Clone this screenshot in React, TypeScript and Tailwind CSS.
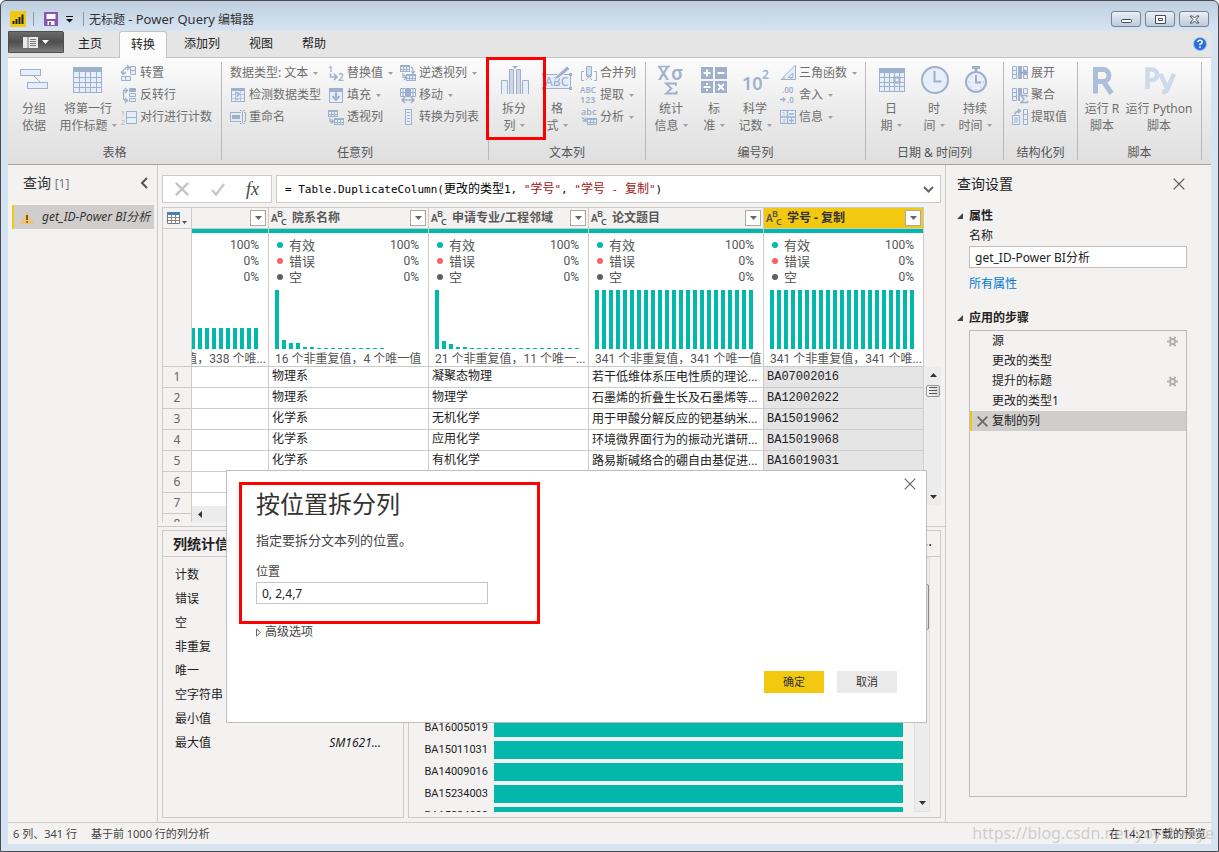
import React from "react";

const C = "#9fb0cc";
const F = "#e6eefa";

function Svg({ s = 16, h, children }: { s?: number; h?: number; children: React.ReactNode }) {
  return (
    <svg width={s} height={h ?? s} viewBox={`0 0 ${s} ${h ?? s}`} fill="none" stroke={C} strokeWidth="1" className="shrink-0 overflow-visible" aria-hidden="true">
      {children}
    </svg>
  );
}

function Caret({ className = "text-[#a0a0a0]" }: { className?: string }) {
  return (
    <svg width="5" height="3" viewBox="0 0 5 3" className={`shrink-0 ${className}`} aria-hidden="true">
      <path d="M0 0h5L2.5 3z" fill="currentColor" />
    </svg>
  );
}

/* ---------- large ribbon icons ---------- */
const big: Record<string, React.ReactNode> = {
  group: (
    <Svg s={30}>
      <rect x="1.500" y="3.500" width="20" height="6" fill={F} />
      <rect x="8.500" y="16.500" width="20" height="6" fill={F} />
      <path d="M15 10l6 6" />
    </Svg>
  ),
  header: (
    <Svg s={30}>
      <rect x=".5" y="1.500" width="28" height="25" fill={F} />
      <rect x="0" y="1" width="29" height="5" fill={C} stroke="none" />
      <path d="M6.500 6v20M12.500 6v20M17.500 6v20M23.500 6v20M1 11.500h27M1 16.500h27M1 21.500h27" />
    </Svg>
  ),
  split: (
    <Svg s={30} h={30}>
      <path d="M2.500 28V14.500h6V28M29.500 28V14.500h-6V28" fill={F} />
      <path d="M10.500 28V3.500h4V28M17.500 28V3.500h4V28" fill="#ccd8e9" />
      <path d="M13 0h6L16 3z" fill={C} stroke="none" />
    </Svg>
  ),
  format: (
    <Svg s={30}>
      <rect x="1.500" y="8.500" width="27" height="14" fill={F} />
      <path d="M0 7h3v3H0zM27 7h3v3h-3zM0 21h3v3H0zM27 21h3v3h-3z" fill={C} stroke="none" />
      <text x="3" y="20" fontSize="12" fontWeight="500" fill={C} stroke="none">ABC</text>
      <path d="M11 15l3-5L25 0l3 3L17 12z" fill={C} stroke="#f4f4f4" />
    </Svg>
  ),
  stats: (
    <Svg s={30}>
      <text x="2" y="14" fontSize="17" fontWeight="600" fill={C} stroke="none">X</text>
      <text x="15" y="14" fontSize="19" fontWeight="600" fill={C} stroke="none">σ</text>
      <path d="M2 .5h12" strokeWidth="1.500" />
      <path d="M20 20v-2.500H10l5.500 5L10 27.500h10.500V25" strokeWidth="1.800" />
    </Svg>
  ),
  standard: (
    <Svg s={30}>
      <path d="M2 1h12v12H2zM16 1h12v12H16zM2 15h12v12H2zM16 15h12v12H16z" fill={C} stroke="none" />
      <path d="M4.500 7h7M8 3.500v7M18.500 7h7M4.500 21h7M19 18l6 6M25 18l-6 6" stroke="#fff" strokeWidth="2" />
      <path d="M7 17h2v2H7zM7 23h2v2H7z" fill="#fff" stroke="none" />
    </Svg>
  ),
  sci: (
    <Svg s={30}>
      <text x="2" y="24" fontSize="18" fontWeight="600" fill={C} stroke="none">10</text>
      <text x="22" y="13" fontSize="12" fontWeight="600" fill={C} stroke="none">2</text>
    </Svg>
  ),
  date: (
    <Svg s={30}>
      <rect x="3.500" y="2.500" width="25" height="23" fill={F} />
      <rect x="3" y="2" width="26" height="5" fill={C} stroke="none" />
      <path d="M8.500 7v18M13.500 7v18M23.500 7v18M18.500 7v18M4 11.500h24M4 16.500h24M4 20.500h24" />
      <rect x="18.500" y="11.500" width="5" height="5" strokeWidth="2" />
    </Svg>
  ),
  time: (
    <Svg s={30}>
      <circle cx="16" cy="14" r="13" fill={F} strokeWidth="2" />
      <path d="M15.500 5v10.500h7" strokeWidth="2" />
    </Svg>
  ),
  duration: (
    <Svg s={30}>
      <path d="M12 1.500h8M16 2v4" strokeWidth="3" />
      <circle cx="16" cy="16" r="10" fill={F} strokeWidth="2" />
      <path d="M16 9v7.500h5" strokeWidth="2" />
      <path d="M8.500 16h1M23 16h1M16 23v1M10.700 10.700l.7.700M21.300 21.300l-.7-.7M10.700 21.300l.7-.7" />
    </Svg>
  ),
  r: (
    <Svg s={30}>
      <path d="M8.500 27.500V3.500H16a5.800 5.800 0 0 1 0 12H9M16.500 15.500l8 12" stroke="#adbfd8" strokeWidth="5" />
    </Svg>
  ),
  py: (
    <Svg s={34} h={30}>
      <path d="M5.500 23V3.500H10a5 5 0 0 1 0 10.500H6" stroke="#cddaea" strokeWidth="4.500" />
      <path d="M18.500 8l6.500 14M32 8l-6.500 15q-1.500 3.500-5.500 3" stroke="#cddaea" strokeWidth="4.500" />
    </Svg>
  ),
};

/* ---------- small ribbon icons ---------- */
const miniTable = (x: number, y: number) => (
  <g transform={`translate(${x} ${y})`}>
    <rect x=".5" y=".5" width="9" height="6" fill={F} />
    <path d="M0 1h10" strokeWidth="2" />
    <path d="M3.500 1v6M6.500 1v6M1 4.500h8" />
  </g>
);

const small: Record<string, React.ReactNode> = {
  transpose: (
    <Svg>
      <path d="M9.500 1.500h5v8h-5zM9.500 5.500h5M.5 11.500h9v4h-9zM4.500 11.500v4" fill={F} />
      <path d="M2 9V5.500L5.500 2.500H8M6 0l2.500 2.500L6 5M0 6.500L2 9.500l3-2.500" strokeWidth="1.400" />
    </Svg>
  ),
  reverse: (
    <Svg>
      <path d="M8.500 1.500h6v3h-6zM8.500 6.500h6v3h-6zM8.500 11.500h6v3h-6z" fill={F} />
      <path d="M8 2h7v3H8z" fill={C} stroke="none" />
      <path d="M6 3.500H2.500V12l1.500 1.500h2M4 1l2.500 2.500L4 6M4 11l2.500 2.500L4 16" strokeWidth="1.300" />
    </Svg>
  ),
  count: (
    <Svg>
      <path d="M5.500 2.500h10v12h-10zM5.500 8.500h10" fill={F} />
      <text x="0" y="7" fontSize="7" fill={C} stroke="none">1</text>
      <text x="0" y="16" fontSize="7" fill={C} stroke="none">2</text>
    </Svg>
  ),
  detect: (
    <Svg>
      <rect x="1.500" y="1.500" width="13" height="13" fill={F} />
      <path d="M1 2.500h14" strokeWidth="3" />
      <path d="M5.500 4v10M10.500 4v10M2 7.500h12M2 11.500h12" strokeOpacity=".6" />
      <text x="5" y="13" fontSize="10" fontWeight="700" fill={C} stroke="none">?</text>
    </Svg>
  ),
  rename: (
    <Svg>
      <path d="M11 3.500H.5v9H11M14 3.500h1.500v9H14" />
      <path d="M2 6h8v4H2z" fill={C} stroke="none" />
      <path d="M12.500 3v10M10 1.500h1.500l1 1 1-1H15M10 14.500h1.500l1-1 1 1H15" />
    </Svg>
  ),
  replace: (
    <Svg>
      <text x="0" y="7" fontSize="9" fontWeight="600" fill={C} stroke="none">1</text>
      <text x="10" y="16" fontSize="10" fontWeight="600" fill={C} stroke="none">2</text>
      <path d="M2.500 8.500v3.500H8M6 9l3 3-3 3" strokeWidth="1.600" />
    </Svg>
  ),
  fill: (
    <Svg>
      <rect x="1.500" y="1.500" width="13" height="14" fill={F} />
      <path d="M1 3h14" strokeWidth="4" />
      <path d="M8 5.500v7M4.500 9L8 12.700 11.500 9" strokeWidth="2" />
    </Svg>
  ),
  pivot: (
    <Svg>
      {miniTable(0, 1)}
      {miniTable(6, 9)}
      <path d="M2 9v3.500h3M3.500 10.500l2 2-2 2" strokeWidth="1.300" />
    </Svg>
  ),
  unpivot: (
    <Svg>
      {miniTable(0, 0)}
      {miniTable(6, 9)}
      <path d="M3 8v4.500h3M4 10l2.500 2.500L4 15M11 2l2 2v4M11 6l2 2.500L15 6" strokeWidth="1.200" />
    </Svg>
  ),
  move: (
    <Svg>
      <path d="M.5 1.500h5v8h-5zM10.500 1.500h5v8h-5zM3 1.500v8M13 1.500v8M.5 5.500h5M10.500 5.500h5" fill={F} />
      <path d="M6 1h4v9H6z" fill={C} stroke="none" />
      <path d="M2 13h12M5 10l-3 3 3 3M11 10l3 3-3 3" strokeWidth="1.500" />
    </Svg>
  ),
  list: (
    <Svg>
      <rect x="5.500" y=".5" width="6" height="15" fill={F} />
      <path d="M7 3.500h3M7 6.500h3M7 9.500h3M7 12.500h3" />
    </Svg>
  ),
  merge: (
    <Svg>
      <path d="M3 6.500H.5v9H3M13 6.500h2.500v9H13" />
      <path d="M5.500 11V1.500h5V11" fill="#d3deed" />
      <path d="M5 8l3 3.500L5 15M11 8l-3 3.500 3 3.500M5.500 11.500h5" />
    </Svg>
  ),
  extract: (
    <Svg>
      <text x="-1" y="6" fontSize="8" fontWeight="600" fill={C} stroke="none">ABC</text>
      <text x="-1" y="16" fontSize="9" fontWeight="600" fill={C} stroke="none">123</text>
    </Svg>
  ),
  parse: (
    <Svg>
      <text x="0" y="6" fontSize="9" fontWeight="600" fill={C} stroke="none">abc</text>
      {miniTable(6, 9)}
      <path d="M1 8.500l4 3M5 8.500v3.500H1.500" strokeWidth="1.300" />
    </Svg>
  ),
  trig: (
    <Svg>
      <path d="M1 14.500h14.500V0zM8 12.500h5V8z" fill={F} />
      <path d="M4 14v-2M11 14v-2" />
    </Svg>
  ),
  round: (
    <Svg>
      <text x="2" y="6" fontSize="8" fontWeight="600" fill={C} stroke="none">.00</text>
      <text x="7" y="16" fontSize="8" fontWeight="600" fill={C} stroke="none">.0</text>
      <path d="M0 12.500h5M3 10.500l2 2-2 2" strokeWidth="1.300" />
    </Svg>
  ),
  info: (
    <Svg>
      <rect x=".5" y="1.500" width="15" height="13" fill={F} />
      <path d="M7.500 2v12M1 8h14M9 5h5M9 11.500h5M11.500 9v5" strokeWidth="1.300" />
      <text x="2" y="7" fontSize="6" fill={C} stroke="none">1</text>
      <text x="2" y="14" fontSize="6" fill={C} stroke="none">3</text>
    </Svg>
  ),
  expand: (
    <Svg>
      <path d="M.5 1.500h4v12h-4zM11.500 1.500h4v12h-4zM.5 5.500h4M.5 9.500h4M11.500 5.500h4M11.500 9.500h4" fill={F} />
      <path d="M6 1h4v13H6z" fill={C} stroke="none" />
      <path d="M8 7.500h6M12 5l2.500 2.500L12 10" strokeWidth="1.400" stroke="#8fa2c2" />
    </Svg>
  ),
  aggregate: (
    <Svg>
      <path d="M.5 1.500h4v12h-4zM11.500 1.500h4v5h-4zM.5 5.500h4M.5 9.500h4" fill={F} />
      <path d="M6 1h4v13H6z" fill={C} stroke="none" />
      <path d="M8 8h8v8H8z" fill="#ececec" stroke="none" />
      <path d="M15 10V8.500H9l3 3.500-3 3.500h6.500V14" strokeWidth="1.500" />
    </Svg>
  ),
  values: (
    <Svg>
      <path d="M.5 6.500h7v9h-7zM2 9h4M2 11h4M2 13h4M11.500.5h4v15h-4zM11.500 5.500h4M11.500 10.500h4" fill={F} />
      <path d="M3 5.500q0-3.500 5-3.500M6 0l2.500 2L6 4" strokeWidth="1.400" />
    </Svg>
  ),
};

function Small({ icon, label, caret }: { icon?: string; label: string; caret?: boolean }) {
  return (
    <button type="button" className="flex h-[22px] items-center gap-[3px] whitespace-nowrap text-[12px] leading-[16px] text-[#6e6e6e]">
      {icon && small[icon]}
      <span>{label}</span>
      {caret && <span className="pl-0.5"><Caret /></span>}
    </button>
  );
}

function Big({ icon, a, b, caret, w }: { icon: string; a: string; b: string; caret?: boolean; w: string }) {
  return (
    <button type="button" className={`flex shrink-0 flex-col items-center whitespace-nowrap pt-1 text-[12px] leading-[17px] text-[#6e6e6e] ${w}`}>
      {big[icon]}
      <span className="mt-1">{a}</span>
      <span className="flex items-center gap-1">
        {b}
        {caret && <Caret />}
      </span>
    </button>
  );
}

function Group({ title, w, children }: { title: string; w: string; children: React.ReactNode }) {
  return (
    <section className={`flex shrink-0 flex-col ${w}`}>
      <div className="my-1 flex flex-1 flex-col border-r border-[#b9b9b9]">
        <div className="flex flex-1 items-start">{children}</div>
        <h2 className="text-center text-[12px] leading-[14px] text-[#555]">{title}</h2>
      </div>
    </section>
  );
}

function Ribbon() {
  return (
    <div className="flex h-[108px] shrink-0 overflow-hidden border-t border-b border-t-[#c4c4c4] border-b-[#a5a5a5] bg-gradient-to-b from-[#fcfcfc] via-[#ebebeb] to-[#dfdfdf]">
      <Group title="表格" w="w-[214px]">
        <Big icon="group" a="分组" b="依据" w="w-[52px]" />
        <Big icon="header" a="将第一行" b="用作标题" caret w="w-[56px]" />
        <div className="pl-[5px]">
          <Small icon="transpose" label="转置" />
          <Small icon="reverse" label="反转行" />
          <Small icon="count" label="对行进行计数" />
        </div>
      </Group>
      <Group title="任意列" w="w-[267px]">
        <div className="w-[106px] shrink-0 pl-2">
          <Small label="数据类型: 文本" caret />
          <Small icon="detect" label="检测数据类型" />
          <Small icon="rename" label="重命名" />
        </div>
        <div className="w-[72px] shrink-0">
          <Small icon="replace" label="替换值" caret />
          <Small icon="fill" label="填充" caret />
          <Small icon="pivot" label="透视列" />
        </div>
        <div>
          <Small icon="unpivot" label="逆透视列" caret />
          <Small icon="move" label="移动" caret />
          <Small icon="list" label="转换为列表" />
        </div>
      </Group>
      <Group title="文本列" w="w-[157px]">
        <Big icon="split" a="拆分" b="列" caret w="w-[50px]" />
        <Big icon="format" a="格" b="式" caret w="w-[36px]" />
        <div className="pl-1.5">
          <Small icon="merge" label="合并列" />
          <Small icon="extract" label="提取" caret />
          <Small icon="parse" label="分析" caret />
        </div>
      </Group>
      <Group title="编号列" w="w-[220px]">
        <Big icon="stats" a="统计" b="信息" caret w="w-[50px]" />
        <Big icon="standard" a="标" b="准" caret w="w-[36px]" />
        <Big icon="sci" a="科学" b="记数" caret w="w-[46px]" />
        <div className="pl-0.5">
          <Small icon="trig" label="三角函数" caret />
          <Small icon="round" label="舍入" caret />
          <Small icon="info" label="信息" caret />
        </div>
      </Group>
      <Group title="日期 & 时间列" w="w-[138px]">
        <Big icon="date" a="日" b="期" caret w="w-[50px]" />
        <Big icon="time" a="时" b="间" caret w="w-[36px]" />
        <Big icon="duration" a="持续" b="时间" caret w="w-[46px]" />
      </Group>
      <Group title="结构化列" w="w-[74px]">
        <div className="pl-2">
          <Small icon="expand" label="展开" />
          <Small icon="aggregate" label="聚合" />
          <Small icon="values" label="提取值" />
        </div>
      </Group>
      <Group title="脚本" w="w-[124px]">
        <Big icon="r" a="运行 R" b="脚本" w="w-[48px]" />
        <Big icon="py" a="运行 Python" b="脚本" w="w-[66px]" />
      </Group>
    </div>
  );
}

/* ---------- title bar and tabs ---------- */
function TitleBar() {
  return (
    <header className="flex h-[30px] shrink-0 items-center pt-1.5 pl-0.5 text-[12px] text-[#333]">
      <svg width="16" height="16" viewBox="0 0 16 16" aria-hidden="true">
        <path d="M0 0h16v16H0z" fill="#f2c811" />
        <path d="M3.500 13v-3M6.500 13V8M9.500 13V6M12.500 13V3.500" stroke="#222" strokeWidth="2" />
      </svg>
      <span className="mx-[7px] h-3.5 w-px bg-[#8b97a3]" />
      <button type="button" aria-label="保存" className="ml-[3px]">
        <svg width="14" height="14" viewBox="0 0 14 14" aria-hidden="true">
          <path d="M0 0h14v14H0z" fill="#8a54b0" />
          <path d="M2.500 2h9v5h-9zM3.500 9h7v4h-7z" fill="#fff" />
          <path d="M5 10h2v3H5z" fill="#8a54b0" />
        </svg>
      </button>
      <button type="button" aria-label="自定义" className="ml-2">
        <svg width="7" height="7" viewBox="0 0 7 7" aria-hidden="true">
          <path d="M0 0h7v1H0zM0 3h7L3.500 6.500z" fill="#111" />
        </svg>
      </button>
      <span className="mr-[5px] ml-2.5 h-3.5 w-px bg-[#8b97a3]" />
      <h1 className="flex-1 leading-[18px]">无标题 <span className="text-[13px]">- Power Query</span> 编辑器</h1>
      <div className="flex gap-1 pr-0.5">
        {["最小化", "最大化", "关闭"].map((n, i) => (
          <button key={n} type="button" aria-label={n} className="flex h-4 w-[30px] items-center justify-center rounded-[3px] border border-[#77828e] bg-gradient-to-b from-[#e9f0f7] to-[#bccbdb]">
            <svg width="11" height="9" viewBox="0 0 11 9" fill="#fff" stroke="#454c55" aria-hidden="true">
              {i === 0 && <rect x=".5" y="4.500" width="10" height="3" rx="1" />}
              {i === 1 && <path d="M.5.500h10v8H.5zM3.500 3.500h4v2h-4z" />}
              {i === 2 && <path d="M1 1h2.500l2 2 2-2H10L7 4.500l3 3.500H7.500l-2-2-2 2H1l3-3.500z" />}
            </svg>
          </button>
        ))}
      </div>
    </header>
  );
}

function Tabs() {
  return (
    <nav className="flex h-[26px] shrink-0 items-stretch gap-[5px] bg-[#e5e5e5] text-[12px] leading-[24px] text-[#222]">
      <button type="button" aria-label="文件" className="-mr-[3px] flex h-[22px] w-14 items-center justify-center gap-1 rounded-tr-[2px] border border-[#4f4f4f] bg-gradient-to-b from-[#6b6b6b] via-[#4e4e4e] to-[#7d7d7d]">
        <svg width="15" height="11" viewBox="0 0 15 11" aria-hidden="true">
          <path d="M0 0h15v11H0z" fill="#e8e8e8" />
          <path d="M5 0v11M7 2.500h6M7 4.500h6M7 6.500h6M7 8.500h6" stroke="#777" />
        </svg>
        <svg width="7" height="4" viewBox="0 0 7 4" aria-hidden="true"><path d="M0 0h7L3.500 4z" fill="#fff" /></svg>
      </button>
      {["主页", "转换", "添加列", "视图", "帮助"].map((t) => (
        <button
          key={t}
          type="button"
          className={
            t === "转换"
              ? "relative z-10 -mb-px rounded-t-[3px] border border-b-0 border-[#c4c4c4] bg-[#fcfcfc] px-[11px]"
              : "px-3"
          }
        >
          {t}
        </button>
      ))}
      <button type="button" aria-label="帮助文档" className="mr-1 ml-auto self-center">
        <svg width="14" height="14" viewBox="0 0 14 14" aria-hidden="true">
          <circle cx="7" cy="7" r="6.500" fill="#2c6fd6" stroke="#9cc0f0" />
          <path d="M4.800 5.200Q5 3.300 7 3.300t2.200 1.900Q9.200 6.500 7 7.300v1M7 9.500V11" fill="none" stroke="#fff" strokeWidth="1.500" />
        </svg>
      </button>
    </nav>
  );
}

function Cross({ size = 12, color = "#555", sw = 1.2 }: { size?: number; color?: string; sw?: number }) {
  return (
    <svg width={size} height={size} viewBox="0 0 12 12" stroke={color} strokeWidth={sw} aria-hidden="true">
      <path d="M.7.700l10.600 10.600M11.300.700L.7 11.300" />
    </svg>
  );
}

/* ---------- queries pane ---------- */
function Queries() {
  return (
    <aside className="w-[150px] shrink-0 border-r border-[#cdcbc9]">
      <div className="flex h-10 items-center justify-between pt-0 pr-[9px] pb-1 pl-[15px] text-[14px] leading-[20px] text-[#333]">
        <span>查询 <span className="text-[12px] text-[#777]">[1]</span></span>
        <button type="button" aria-label="折叠">
          <svg width="8" height="12" viewBox="0 0 8 12" fill="none" stroke="#555" strokeWidth="2" aria-hidden="true"><path d="M7 1L2 6l5 5" /></svg>
        </button>
      </div>
      <button type="button" className="ml-1 flex h-6 w-[142px] items-center gap-2 border-l-2 border-[#f2c811] bg-[#d0cecd] pl-1.5 text-[12px] whitespace-nowrap text-[#333] italic">
        <svg width="14" height="13" viewBox="0 0 14 13" className="shrink-0" aria-hidden="true">
          <path d="M7 0.500L14 13H0z" fill="#f0c276" />
          <path d="M7 4v5M7 10.300v1.500" stroke="#444" strokeWidth="1.600" />
        </svg>
        get_ID-Power BI分析
      </button>
    </aside>
  );
}

/* ---------- data grid ---------- */
type Col = { name: string; w: number; cap: string; bars: number[]; active?: boolean; clipped?: boolean };
const rep = (n: number, v: number) => Array<number>(n).fill(v);
const cols: Col[] = [
  { name: "", w: 77, cap: "339 个非重复值，338 个唯...", bars: rep(21, 21), clipped: true },
  { name: "院系名称", w: 160, cap: "16 个非重复值，4 个唯一值", bars: [59, 9, 6, 6, 2, 2, ...rep(10, 1)] },
  { name: "申请专业/工程邻域", w: 160, cap: "21 个非重复值，11 个唯一...", bars: [59, 8, 5, 2, 2, ...rep(16, 1)] },
  { name: "论文题目", w: 175, cap: "341 个非重复值，341 个唯一值", bars: rep(24, 59) },
  { name: "学号 - 复制", w: 160, cap: "341 个非重复值，341 个唯...", bars: rep(21, 59), active: true },
];
const rows = [
  ["", "物理系", "凝聚态物理", "若干低维体系压电性质的理论...", "BA07002016"],
  ["", "物理系", "物理学", "石墨烯的折叠生长及石墨烯等...", "BA12002022"],
  ["", "化学系", "无机化学", "用于甲酸分解反应的钯基纳米...", "BA15019062"],
  ["", "化学系", "应用化学", "环境微界面行为的振动光谱研...", "BA15019068"],
  ["", "化学系", "有机化学", "路易斯碱络合的硼自由基促进...", "BA16019031"],
  ["", "", "", "", ""],
  ["", "", "", "", ""],
  ["", "", "", "", ""],
];

function Profile({ col }: { col: Col }) {
  const lines = [
    ["有效", "100%", "bg-[#01b8aa]"],
    ["错误", "0%", "bg-[#fd625e]"],
    ["空", "0%", "bg-[#5f6062]"],
  ];
  return (
    <div className="flex flex-col">
      <div className="h-1 bg-[#01b8aa]" />
      <div className="flex justify-end overflow-hidden">
        <div className={col.clipped ? "w-[160px] shrink-0 pr-[7px] pl-1.5" : "w-full pr-[7px] pl-1.5"}>
          <div className="pt-1 pr-0.5">
            {lines.map(([l, p, c]) => (
              <div key={l} className="flex h-4 items-center pl-0.5 text-[13px] leading-[16px] text-[#555]">
                <span className={`size-1.5 rounded-full ${c}`} />
                <span className="flex-1 pl-1.5">{l}</span>
                <span className="font-['Roboto'] text-[12px]">{p}</span>
              </div>
            ))}
          </div>
          <div className="mt-1 flex h-[60px] items-end gap-[3px] overflow-hidden">
            {col.bars.map((h, i) => (
              <span key={i} className="w-1 shrink-0 bg-[#01b8aa]" style={{ height: h }} />
            ))}
          </div>
          <div className="h-4 pt-0.5 font-['Roboto','Noto_Sans_CJK_SC',sans-serif] text-[12px] leading-[16px] whitespace-nowrap text-[#555]">{col.cap}</div>
        </div>
      </div>
    </div>
  );
}

function Grid() {
  return (
    <div className="flex h-[315px] shrink-0">
      <div className="relative min-w-0 flex-1 overflow-hidden">
        <table className="w-[762px] table-fixed border-separate border-spacing-0 border-t border-l border-[#cdcbc9]">
          <colgroup>
            <col className="w-[29px]" />
            {cols.map((c) => <col key={c.name} style={{ width: c.w }} />)}
          </colgroup>
          <thead>
            <tr className="h-[21px]">
              <th className="border-r border-b border-[#cdcbc9] bg-[#f3f2f1] p-0">
                <button type="button" aria-label="表选项" className="flex items-end gap-0.5 pl-1">
                  <svg width="13" height="12" viewBox="0 0 13 12" aria-hidden="true">
                    <path d="M.5.500h12v11H.5z" fill="#fff" stroke="#777" />
                    <path d="M0 0h13v3H0z" fill="#4a7ebb" />
                    <path d="M4.500 3v8M8.500 3v8M1 5.500h11M1 8.500h11" stroke="#888" />
                  </svg>
                  <Caret className="text-[#555]" />
                </button>
              </th>
              {cols.map((c) => (
                <th key={c.name} scope="col" className={`border-r border-b border-[#cdcbc9] p-0 text-left ${c.active ? "bg-[#f2c811] text-[#333]" : "bg-[#f3f2f1] text-[#5a5a5a]"}`}>
                  <div className="flex h-5 items-center pr-0.5 pl-0.5">
                    {c.name && (
                      <svg width="17" height="16" viewBox="0 0 17 16" fill="#555" fontSize="10" fontWeight="600" className="shrink-0 overflow-visible" aria-hidden="true">
                        <text x="0" y="12">A</text>
                        <text x="6" y="7" fontSize="9">B</text>
                        <text x="10" y="15" fontSize="9">C</text>
                      </svg>
                    )}
                    <span className="flex-1 truncate pl-1 text-[12px] leading-[18px] font-bold">{c.name}</span>
                    <button type="button" aria-label="筛选" className="flex size-4 shrink-0 items-center justify-center border border-[#a9a9a9] bg-white">
                      <svg width="7" height="4" viewBox="0 0 7 4" aria-hidden="true"><path d="M0 0h7L3.500 4z" fill="#666" /></svg>
                    </button>
                  </div>
                </th>
              ))}
            </tr>
            <tr className="h-[138px]">
              <td className="border-r border-b border-[#cdcbc9] bg-[#f3f2f1]" />
              {cols.map((c) => (
                <td key={c.name} className="overflow-hidden border-r border-b border-[#cdcbc9] bg-white p-0 align-top">
                  <Profile col={c} />
                </td>
              ))}
            </tr>
          </thead>
          <tbody>
            {rows.map((r, i) => (
              <tr key={i} className="h-[21px]">
                <th scope="row" className="border-r border-b border-[#cdcbc9] bg-[#f3f2f1] p-0 text-center text-[12px] leading-[18px] font-normal text-[#666]">{i + 1}</th>
                {r.map((v, j) => (
                  <td key={j} className={`truncate border-r border-b border-[#cdcbc9] py-0 pr-0 pl-[3px] font-['Liberation_Mono','Noto_Sans_CJK_SC',monospace] text-[12px] leading-[18px] text-[#222] ${j === 4 ? "bg-[#e5e5e5]" : "bg-white"}`}>
                    {v.endsWith("...") ? <>{v.slice(0, -3)}<span className="font-['Roboto']">...</span></> : v}
                  </td>
                ))}
              </tr>
            ))}
          </tbody>
        </table>
        <div className="absolute right-0 bottom-0 left-[30px] flex h-4 items-center bg-[#ececec] pl-1.5">
          <svg width="4" height="7" viewBox="0 0 4 7" aria-hidden="true"><path d="M4 0v7L0 3.500z" fill="#333" /></svg>
        </div>
      </div>
      <div className="mt-[160px] flex h-[138px] w-4 shrink-0 flex-col items-center bg-[#ececec] py-1.5">
        <svg width="7" height="4" viewBox="0 0 7 4" aria-hidden="true"><path d="M0 4h7L3.500 0z" fill="#333" /></svg>
        <div className="mt-2 flex h-3 w-3.5 items-center justify-center rounded-[2px] border border-[#959595] bg-gradient-to-r from-[#fafafa] to-[#d5d5d5]">
          <svg width="8" height="8" viewBox="0 0 8 8" stroke="#555" aria-hidden="true"><path d="M0 .5h8M0 3.500h8M0 6.500h8" /></svg>
        </div>
        <svg width="7" height="4" viewBox="0 0 7 4" className="mt-auto" aria-hidden="true"><path d="M0 0h7L3.500 4z" fill="#333" /></svg>
      </div>
    </div>
  );
}

function FormulaBar() {
  return (
    <div className="flex h-7 shrink-0 gap-1">
      <div className="flex w-[110px] shrink-0 items-center justify-between border border-[#cdcbc9] bg-white px-3">
        <button type="button" aria-label="取消公式"><Cross size={14} color="#c4c4c4" sw={2} /></button>
        <button type="button" aria-label="确认公式">
          <svg width="14" height="13" viewBox="0 0 14 13" fill="none" stroke="#c8c8c8" strokeWidth="2.500" aria-hidden="true"><path d="M1 7l4 4.500L13 1" /></svg>
        </button>
        <span className="font-['Liberation_Serif'] text-[18px] leading-[20px] text-[#444] italic">fx</span>
      </div>
      <div className="flex min-w-0 flex-1 items-center justify-between border border-[#cdcbc9] bg-white pr-1.5 pl-2">
        <code className="truncate font-['DejaVu_Sans_Mono','Noto_Sans_CJK_SC',monospace] text-[11px] leading-[18px] text-black">
          = Table.DuplicateColumn(<span className="text-[12px]">更改的类型</span>1, <span className="text-[#a31515]">"<span className="text-[12px]">学号</span>"</span>, <span className="text-[#a31515]">"<span className="text-[12px]">学号</span> - <span className="text-[12px]">复制</span>"</span>)
        </code>
        <button type="button" aria-label="展开公式">
          <svg width="11" height="7" viewBox="0 0 11 7" fill="none" stroke="#666" strokeWidth="2" aria-hidden="true"><path d="M1 1l4.500 4.500L10 1" /></svg>
        </button>
      </div>
    </div>
  );
}

/* ---------- column statistics ---------- */
const stats = [["计数", "341"], ["错误", "0"], ["空", "0"], ["非重复", "341"], ["唯一", "341"], ["空字符串", "0"], ["最小值", "BA0700..."], ["最大值", "SM1621..."]];
const values = ["BA07002016", "BA12002022", "BA15019062", "BA15019068", "BA16019031", "BA16005006", "BA16005012", "BA16005019", "BA15011031", "BA14009016", "BA15234003", "BA15234008"];

function Stats() {
  return (
    <div className="mx-1 mt-[3px] mb-1 flex min-h-0 flex-1 gap-1">
      <section className="flex w-[242px] shrink-0 flex-col border border-[#cdcbc9]">
        <h2 className="h-[26px] shrink-0 border-b border-[#cdcbc9] pl-2.5 text-[14px] leading-[26px] font-bold text-[#222]">列统计信息</h2>
        <dl className="pt-1.5 pr-[22px] pl-3 text-[12px] leading-[24px] text-[#222]">
          {stats.map(([k, v]) => (
            <div key={k} className="flex justify-between">
              <dt>{k}</dt>
              <dd className="italic">{v}</dd>
            </div>
          ))}
        </dl>
      </section>
      <section className="flex min-w-0 flex-1 flex-col border border-[#cdcbc9]">
        <div className="flex h-[26px] shrink-0 items-center justify-between border-b border-[#cdcbc9] pr-2 pl-2.5 text-[#222]">
          <h2 className="text-[14px] leading-[24px] font-bold">值分布</h2>
          <button type="button" aria-label="更多" className="pb-1.5 text-[14px]">...</button>
        </div>
        <div className="mb-[5px] flex min-h-0 flex-1 pr-2.5">
          <ul className="flex min-h-0 flex-1 flex-col gap-1 overflow-hidden pt-2">
            {values.map((v) => (
              <li key={v} className="flex h-[18px] shrink-0 items-center">
                <span className="w-[85px] shrink-0 pr-1.5 text-right font-['Roboto'] text-[11px] leading-[18px] text-[#222]">{v}</span>
                <span className="h-full flex-1 bg-[#01b8aa]" />
              </li>
            ))}
          </ul>
          <div className="ml-[11px] flex w-4 shrink-0 flex-col items-center justify-between border border-[#e0e0e0] bg-[#ececec] pt-[26px] pb-1.5">
            <div className="h-[46px] w-full rounded-[2px] border border-[#8a8a8a] bg-[#dcdcdc]" />
            <svg width="7" height="4" viewBox="0 0 7 4" aria-hidden="true"><path d="M0 0h7L3.500 4z" fill="#333" /></svg>
          </div>
        </div>
      </section>
    </div>
  );
}

/* ---------- settings pane ---------- */
function Section({ children }: { children: React.ReactNode }) {
  return (
    <h3 className="flex items-center gap-1.5 text-[12px] leading-[20px] font-bold text-[#222]">
      <svg width="6" height="6" viewBox="0 0 6 6" aria-hidden="true"><path d="M6 0v6H0z" fill="#444" /></svg>
      {children}
    </h3>
  );
}

function Gear() {
  return (
    <svg width="11" height="11" viewBox="0 0 11 11" fill="none" stroke="#b0b0b0" aria-hidden="true">
      <circle cx="5.500" cy="5.500" r="2.500" strokeWidth="1.800" />
      <path d="M8 5.500h3M0 5.500h3M6.800 3.200l1.500-2.500M4.200 3.200L2.700.700M6.800 7.800l1.500 2.500M4.200 7.800l-1.500 2.500" strokeWidth="2" />
    </svg>
  );
}

function Settings() {
  const steps = [["源", true], ["更改的类型", false], ["提升的标题", true], ["更改的类型1", false], ["复制的列", false]] as const;
  return (
    <aside className="flex w-[265px] shrink-0 flex-col pr-6 pb-[25px] pl-[11px] text-[12px] leading-[20px] text-[#222]">
      <div className="flex h-[41px] shrink-0 items-center justify-between pr-0.5 pb-1 text-[14px]">
        <h2>查询设置</h2>
        <button type="button" aria-label="关闭设置"><Cross /></button>
      </div>
      <Section>属性</Section>
      <div className="flex flex-col items-start pl-3">
        <label htmlFor="query-name">名称</label>
        <input id="query-name" defaultValue="get_ID-Power BI分析" className="h-[22px] w-full border border-[#bfbdbb] bg-white px-[5px] outline-none" />
        <a href="#properties" className="mt-1.5 text-[#0078d4]">所有属性</a>
      </div>
      <div className="mt-3.5"><Section>应用的步骤</Section></div>
      <ol className="mt-0.5 ml-3 flex-1 border border-[#bfbdbb]">
        {steps.map(([s, g]) => {
          const on = s === "复制的列";
          return (
            <li key={s} className={`flex h-5 items-center border-l-2 pr-2 ${on ? "border-[#f2c811] bg-[#d0cecd]" : "border-transparent"}`}>
              <span className="flex w-5 shrink-0 justify-center">{on && <Cross size={11} color="#666" sw={1.8} />}</span>
              <span className="flex-1">{s}</span>
              {g && <button type="button" aria-label={`${s} 设置`}><Gear /></button>}
            </li>
          );
        })}
      </ol>
    </aside>
  );
}

/* ---------- split-by-position dialog ---------- */
function Dialog() {
  return (
    <div role="dialog" aria-labelledby="dlg-title" className="absolute top-[469px] left-[225px] z-20 flex h-[253px] w-[701px] flex-col border border-[#c0bebc] bg-white px-[29px] pt-4 text-[#444]">
      <h2 id="dlg-title" className="text-[24px] leading-[34px] text-[#333]">按位置拆分列</h2>
      <p className="mt-[9px] text-[13px] leading-[20px]">指定要拆分文本列的位置。</p>
      <label htmlFor="positions" className="mt-3 text-[12px] leading-[20px]">位置</label>
      <input id="positions" defaultValue="0, 2,4,7" className="h-[22px] w-[232px] border border-[#c8c6c4] px-[5px] text-[12px] text-[#222] outline-none" />
      <button type="button" className="mt-[18px] flex items-center gap-1 self-start text-[12px] leading-[20px]">
        <svg width="5" height="9" viewBox="0 0 5 9" fill="none" stroke="#666" aria-hidden="true"><path d="M.5 1v7l4-3.500z" /></svg>
        高级选项
      </button>
      <div className="mt-auto mb-[29px] flex justify-end gap-[13px] text-[11px] leading-[22px] text-[#333]">
        <button type="button" className="w-[60px] bg-[#f2c811]">确定</button>
        <button type="button" className="w-[60px] bg-[#eaeaea]">取消</button>
      </div>
      <button type="button" aria-label="关闭" className="absolute top-[7px] right-[10px]"><Cross size={12} color="#666" /></button>
    </div>
  );
}

export default function App() {
  return (
    <div className="relative flex h-screen flex-col overflow-hidden rounded-t-[6px] border border-[#4a4a50] bg-[#d6e4f2] bg-gradient-to-b from-[#bfcfdf] to-[#d6e4f2] to-[30px] px-[7px] pb-[7px] font-['Noto_Sans','Noto_Sans_CJK_SC',sans-serif]">
      <TitleBar />
      <Tabs />
      <Ribbon />
      <main className="flex min-h-0 flex-1 bg-[#f3f2f1]">
        <Queries />
        <div className="flex min-w-0 flex-1 flex-col border-r border-[#cdcbc9] pt-2.5">
          <div className="flex shrink-0 flex-col gap-1 border-b border-[#cdcbc9] px-1 pb-1">
            <FormulaBar />
            <Grid />
          </div>
          <Stats />
        </div>
        <Settings />
      </main>
      <footer className="flex h-[22px] shrink-0 items-center gap-3.5 border-t border-[#cdcbc9] bg-[#f3f2f1] px-[5px] text-[11px] leading-[20px] text-[#444]">
        <span>6 列、341 行</span>
        <span className="flex-1">基于前 1000 行的列分析</span>
        <span className="text-[#222]">在 14:21下载的预览</span>
      </footer>
      <Dialog />
      <div className="pointer-events-none absolute top-[56px] left-[485px] z-30 h-[83px] w-[60px] border-3 border-[#ff0000]" />
      <div className="pointer-events-none absolute top-[481px] left-[238px] z-30 h-[142px] w-[301px] border-3 border-[#ff0000]" />
      <div className="pointer-events-none absolute right-1 bottom-2 z-30 text-[16px] leading-[20px] text-[#b4b4b4]/60">https://blog.csdn.net/yoyshaoye</div>
    </div>
  );
}
